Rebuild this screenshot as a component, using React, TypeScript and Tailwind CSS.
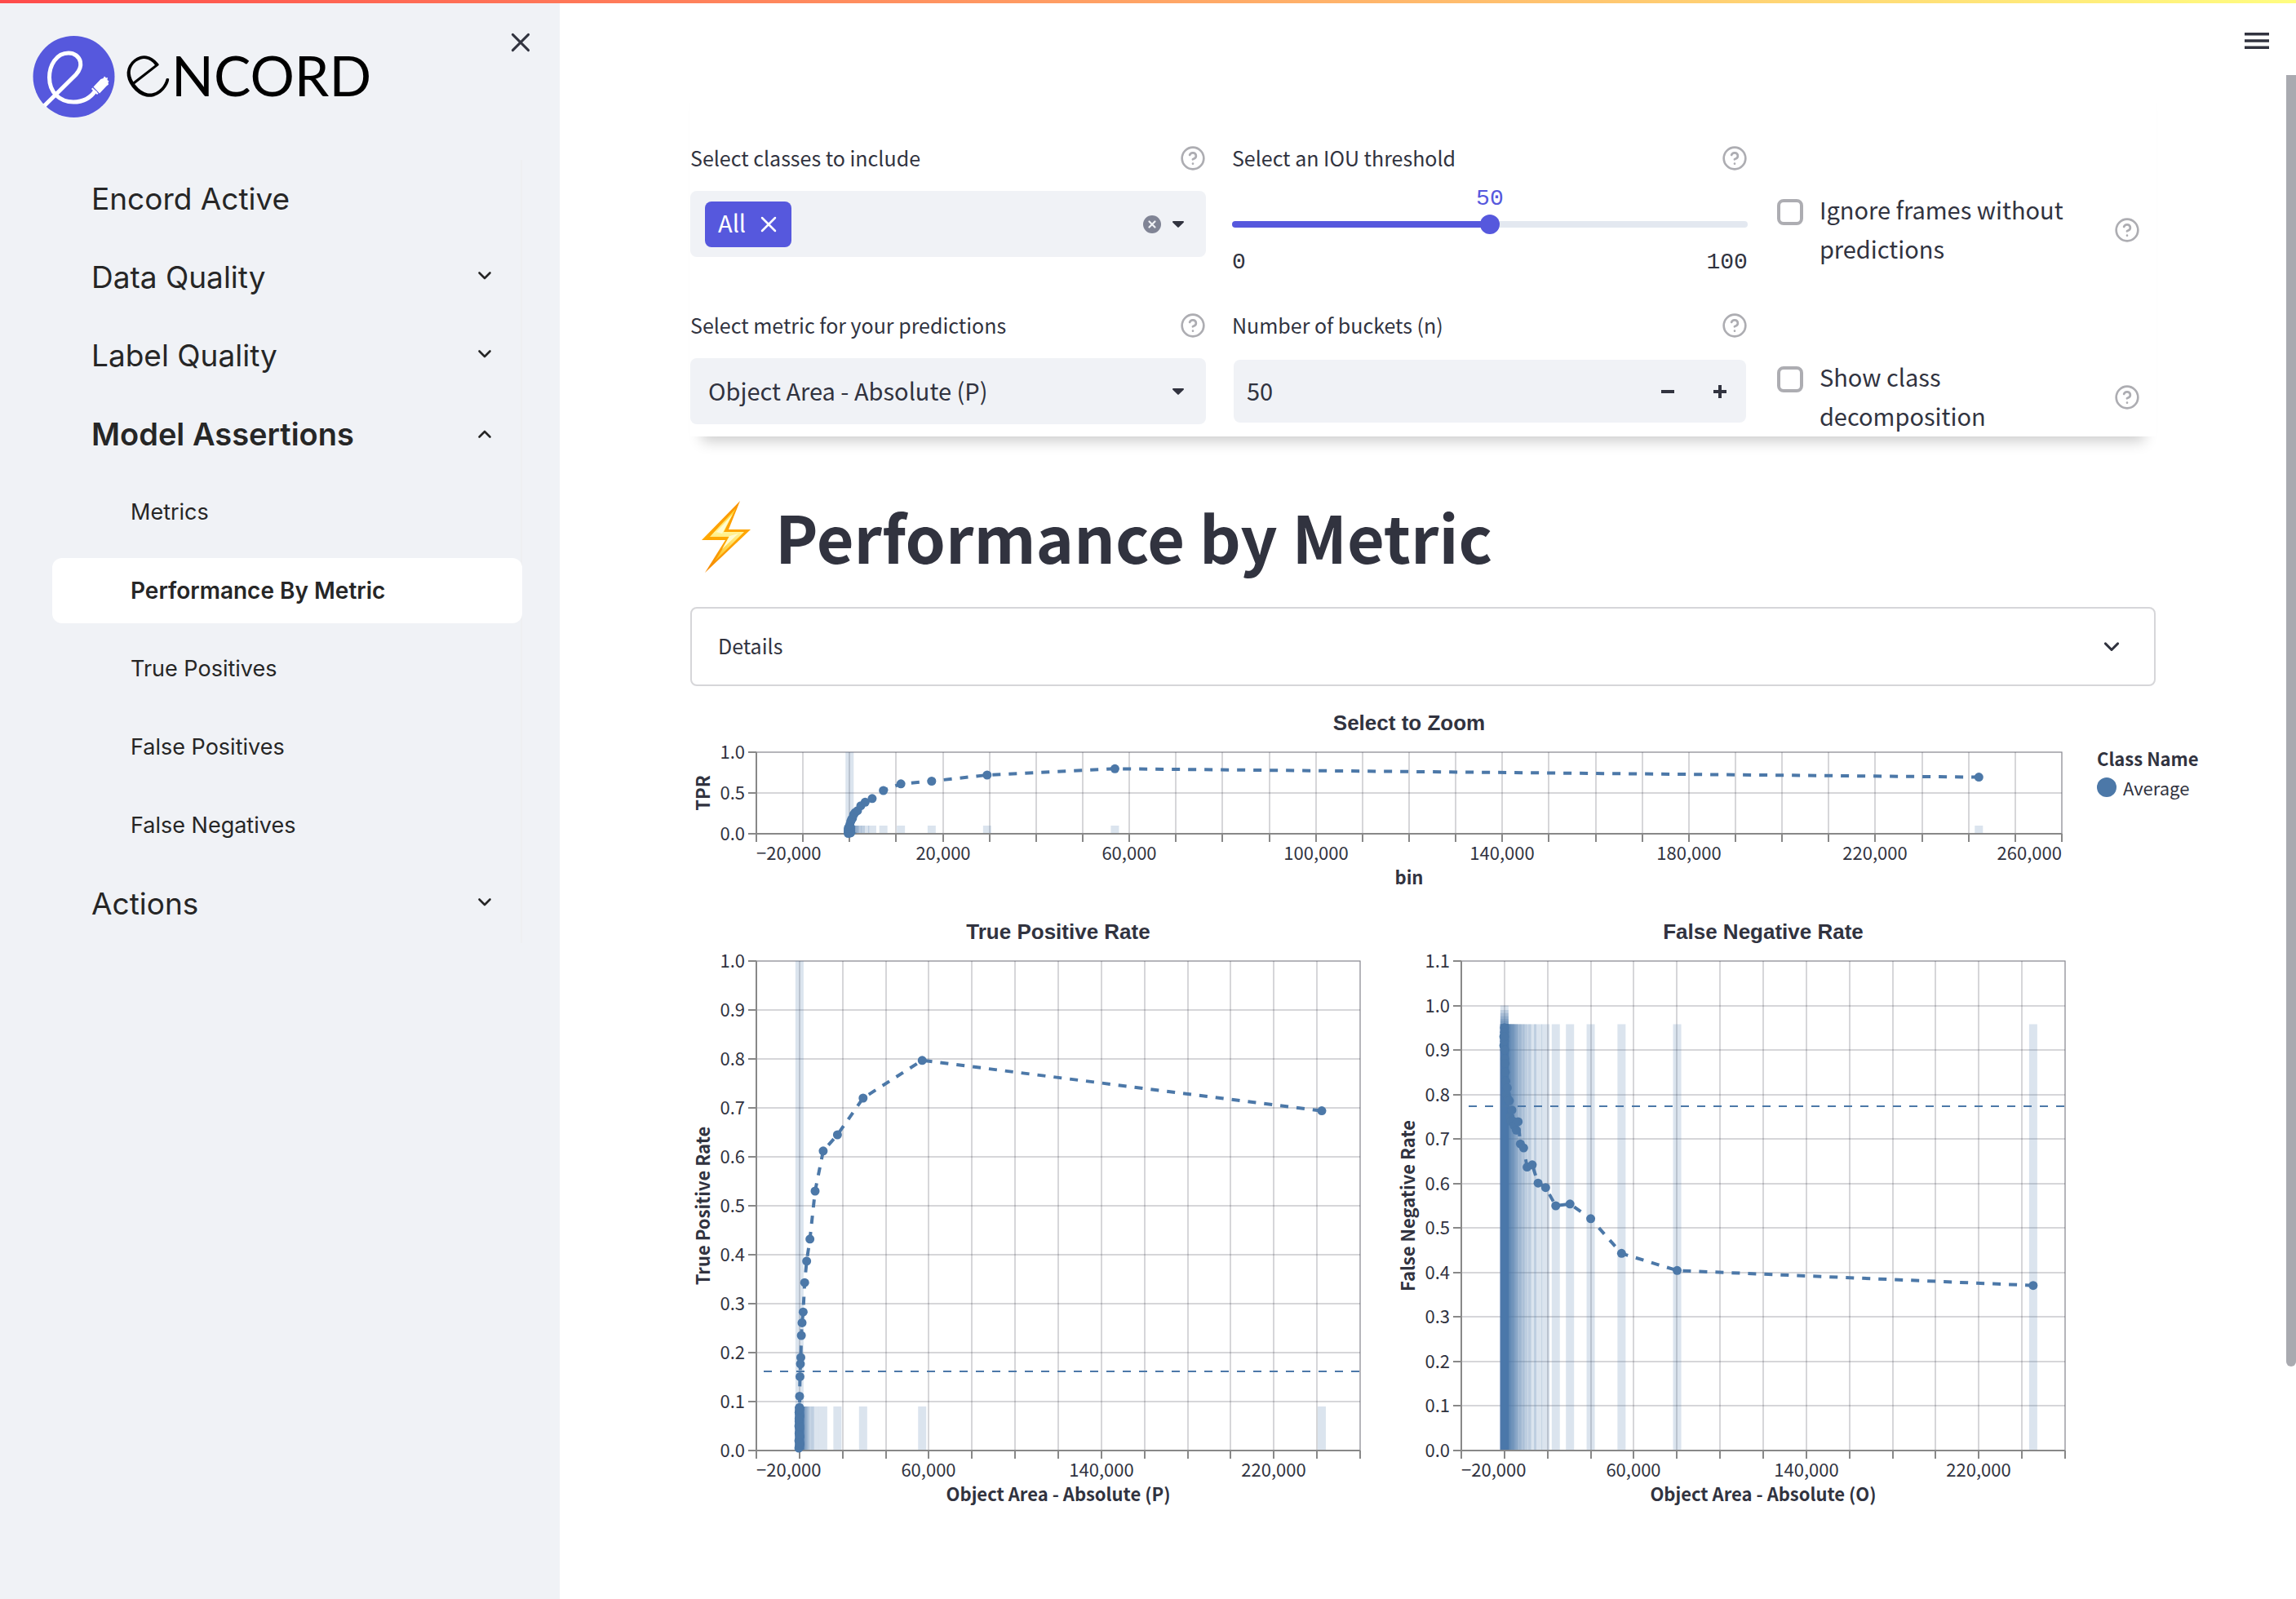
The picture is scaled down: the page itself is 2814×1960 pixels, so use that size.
import { useState } from "react";

type Point = [number, number];

/* ---------- icons ---------- */

function HelpIcon() {
  return (
    <svg viewBox="0 0 24 24" className="size-8 shrink-0" fill="none" stroke="#adadb2" strokeWidth="2" strokeLinecap="round" strokeLinejoin="round">
      <circle cx="12" cy="12" r="10" />
      <path d="M9.09 9a3 3 0 0 1 5.83 1c0 2-3 3-3 3" />
      <path d="M12 17h.01" />
    </svg>
  );
}

function Chevron({ up = false, className = "h-3 w-5" }: { up?: boolean; className?: string }) {
  return (
    <svg viewBox="0 0 20 12" className={`shrink-0 ${className}`} fill="none" stroke="currentColor" strokeWidth="2.6" strokeLinecap="round" strokeLinejoin="round">
      {up ? <path d="M3.5 9.5 10 3l6.500 6.500" /> : <path d="M3.500 2.500 10 9l6.500-6.500" />}
    </svg>
  );
}

function Cross({ className }: { className: string }) {
  return (
    <svg viewBox="0 0 20 20" className={className} fill="none" stroke="currentColor" strokeWidth="2.500" strokeLinecap="round">
      <path d="M2 2 18 18M18 2 2 18" />
    </svg>
  );
}

function Caret() {
  return (
    <svg viewBox="0 0 14 8" className="h-2 w-3.5 shrink-0" fill="#31333f">
      <path d="M1 0h12a1 1 0 0 1 .7 1.700L7.700 7.600a1 1 0 0 1-1.400 0L.3 1.700A1 1 0 0 1 1 0z" />
    </svg>
  );
}

function Bolt() {
  return (
    <svg viewBox="0 0 60 88" className="h-[88px] w-[60px] shrink-0" strokeLinejoin="round">
      <defs>
        <linearGradient id="bolt-edge" x1="0" y1="0" x2="0" y2="1">
          <stop offset="0" stopColor="#fb9405" />
          <stop offset="0.5" stopColor="#ffa800" />
          <stop offset="1" stopColor="#f58a07" />
        </linearGradient>
        <linearGradient id="bolt-fill" x1="0" y1="0" x2="0" y2="1">
          <stop offset="0" stopColor="#ffd21f" />
          <stop offset="0.450" stopColor="#fff59a" />
          <stop offset="1" stopColor="#ffbe12" />
        </linearGradient>
      </defs>
      <path d="M47 0 0 48h29L4 88l56-53H33z" fill="url(#bolt-edge)" />
      <path d="M42 9 10 44h25L16 74l36-36H27z" fill="url(#bolt-fill)" />
      <path d="M38 16 18 38l7 2zM34 43l-9 16 20-19z" fill="#fffbd0" />
    </svg>
  );
}

function Logo() {
  return (
    <svg viewBox="0 0 420 100" className="h-[100px] w-[420px] overflow-visible" role="img" aria-label="Encord">
      <circle cx="50.500" cy="50" r="50" fill="#5658dd" />
      <g fill="none" stroke="#fff" strokeWidth="5">
        <path d="M14.500 85.500 53 47.500C58 42 59.500 37 58.500 32 57 25 51 21 44 21 29 21 20.500 36 20.500 51 20.500 69 33 81 50 81 61 81 71 76 77 67" />
      </g>
      <g fill="#fff">
        <path d="m74.500 62.500 9-9.500 3-1 1.500-2.500 2 2 2-.5-.5 3 2 1.500-1 1.500.5 2.500-2.500 2-8.500 9z" />
        <path d="m73.500 63.500 7 7-1.500 1.500-7-7z" />
      </g>
      <text x="139" y="76" className="font-[Lato] text-[102px] font-light" textAnchor="middle" transform="rotate(-38 139 50)" fill="#000">e</text>
      <text x="170" y="74" className="font-[Lato] text-[68px] font-normal" fill="#000">NCORD</text>
    </svg>
  );
}

/* ---------- sidebar ---------- */

const sections = [
  { label: "Encord Active", icon: "none" },
  { label: "Data Quality", icon: "down" },
  { label: "Label Quality", icon: "down" },
  {
    label: "Model Assertions",
    icon: "up",
    children: ["Metrics", "Performance By Metric", "True Positives", "False Positives", "False Negatives"],
  },
  { label: "Actions", icon: "down" },
];

function Sidebar() {
  return (
    <aside className="flex w-[686px] shrink-0 flex-col bg-[#f0f2f6] font-[Inter,sans-serif] text-[#262626]">
      <div className="flex items-start justify-between pl-10 pr-9 pt-10">
        <div className="pt-1">
          <Logo />
        </div>
        <button type="button" aria-label="Close sidebar" className="flex size-6 items-center justify-center text-[#31333f]">
          <Cross className="size-6" />
        </button>
      </div>
      <nav className="ml-16 mr-[46px] mt-[52px] flex flex-col gap-4 border-r-2 border-[#eeeff1] py-2">
        {sections.map((s) => (
          <div key={s.label} className="flex flex-col gap-4">
            <a href="#" className="flex h-20 items-center justify-between pl-12 pr-[34px]">
              <span className={s.children ? "text-[38px] font-semibold" : "text-[37px]"}>{s.label}</span>
              {s.icon !== "none" && <Chevron up={s.icon === "up"} className={s.icon === "up" ? "h-3 w-5" : "mb-1 h-3 w-5"} />}
            </a>
            {s.children?.map((c) => (
              <a
                key={c}
                href="#"
                className={
                  c === "Performance By Metric"
                    ? "-mr-0.5 flex h-20 items-center rounded-xl bg-white pl-24 text-[28px] font-semibold"
                    : "flex h-20 items-center pl-24 text-[27px]"
                }
              >
                {c}
              </a>
            ))}
          </div>
        ))}
      </nav>
    </aside>
  );
}

/* ---------- controls ---------- */

function FieldLabel({ htmlFor, children }: { htmlFor: string; children: string }) {
  return (
    <div className="mb-[27px] flex h-[27px] items-center justify-between">
      <label htmlFor={htmlFor} className="pb-0.5 text-[25px] leading-[30px]">
        {children}
      </label>
      <HelpIcon />
    </div>
  );
}

function CheckField({ id, children }: { id: string; children: string }) {
  return (
    <div className="flex items-center self-start pl-1 pr-[19px] pt-[52px]">
      <input
        id={id}
        type="checkbox"
        className="mr-5 mt-3 size-8 shrink-0 appearance-none self-start rounded-lg border-4 border-[#adadb2] bg-white checked:bg-[#5658dd]"
      />
      <label htmlFor={id} className="flex-1 pr-8 text-[29px] leading-[48px]">
        {children}
      </label>
      <div className="pt-1">
        <HelpIcon />
      </div>
    </div>
  );
}

function Controls() {
  const [buckets, setBuckets] = useState(50);
  const [iou, setIou] = useState(50);
  return (
    <section className="flex flex-col gap-[53px] bg-white pb-0.5 pt-[88px] shadow-[0_20px_16px_-14px_rgba(0,0,0,0.2)]">
      <div className="grid grid-cols-[1.35fr_1.35fr_1fr] gap-8">
        <div>
          <FieldLabel htmlFor="classes">Select classes to include</FieldLabel>
          <div className="flex h-[81px] items-center rounded-lg bg-[#f0f2f6] pl-[18px] pr-[27px]">
            <span className="flex h-14 items-center gap-[18px] rounded-lg bg-[#5658dd] px-4 text-[29px] leading-none text-white">
              <span className="pb-1">All</span>
              <button type="button" aria-label="Remove All">
                <Cross className="mr-0.5 size-5" />
              </button>
            </span>
            <input id="classes" type="text" className="h-full min-w-0 flex-1 bg-transparent px-2 outline-none" />
            <button type="button" aria-label="Clear all" className="mr-3.5">
              <svg viewBox="0 0 22 22" className="size-[22px]">
                <circle cx="11" cy="11" r="11" fill="#808495" />
                <path d="m7.500 7.500 7 7m0-7-7 7" stroke="#f0f2f6" strokeWidth="2.200" strokeLinecap="round" />
              </svg>
            </button>
            <Caret />
          </div>
        </div>
        <div>
          <FieldLabel htmlFor="iou">Select an IOU threshold</FieldLabel>
          <output htmlFor="iou" className="block text-center font-['Liberation_Mono'] text-[28px] leading-5 text-[#5658dd]">
            {iou}
          </output>
          <div className="mt-[9px] flex h-6 items-center">
            <input
              id="iou"
              type="range"
              min={0}
              max={100}
              value={iou}
              onChange={(e) => setIou(Number(e.target.value))}
              style={{ backgroundImage: `linear-gradient(to right, #5658dd ${iou}%, #e3e8f0 ${iou}%)` }}
              className="h-2 w-full appearance-none rounded [&::-webkit-slider-thumb]:size-6 [&::-webkit-slider-thumb]:appearance-none [&::-webkit-slider-thumb]:rounded-full [&::-webkit-slider-thumb]:bg-[#5658dd]"
            />
          </div>
          <div className="mt-[25px] flex justify-between font-['Liberation_Mono'] text-[28px] leading-5">
            <span>0</span>
            <span>100</span>
          </div>
        </div>
        <CheckField id="ignore">Ignore frames without predictions</CheckField>
      </div>
      <div className="grid grid-cols-[1.35fr_1.35fr_1fr] gap-8">
        <div>
          <FieldLabel htmlFor="metric">Select metric for your predictions</FieldLabel>
          <div className="relative">
            <select id="metric" className="h-[81px] w-full appearance-none rounded-lg bg-[#f0f2f6] pb-0.5 pl-[22px] pr-16 text-[29px]">
              <option>Object Area - Absolute (P)</option>
            </select>
            <div className="pointer-events-none absolute inset-y-0 right-[27px] flex items-center">
              <Caret />
            </div>
          </div>
        </div>
        <div>
          <FieldLabel htmlFor="buckets">Number of buckets (n)</FieldLabel>
          <div className="mx-0.5 mt-[29px] flex h-[77px] items-center rounded-lg bg-[#f0f2f6] pl-4">
            <input
              id="buckets"
              type="text"
              inputMode="numeric"
              value={buckets}
              onChange={(e) => setBuckets(Number(e.target.value) || 0)}
              className="h-full min-w-0 flex-1 bg-transparent pb-1 text-[29px] outline-none"
            />
            <button type="button" aria-label="Decrease" onClick={() => setBuckets(buckets - 1)} className="flex size-16 items-center justify-center">
              <span className="h-1 w-4 bg-[#31333f]" />
            </button>
            <button type="button" aria-label="Increase" onClick={() => setBuckets(buckets + 1)} className="flex size-16 items-center justify-center">
              <svg viewBox="0 0 16 16" className="size-4" fill="#31333f">
                <path d="M6 0h4v6h6v4h-6v6H6v-6H0V6h6z" />
              </svg>
            </button>
          </div>
        </div>
        <CheckField id="decompose">Show class decomposition</CheckField>
      </div>
    </section>
  );
}

/* ---------- charts ---------- */

const BLUE = "#4c78a8";

// Bucket centre in thousands of square pixels, rate in that bucket.
const tprPoints: Point[] = [
  [-0.3, 0.005], [0.2, 0.012], [-0.3, 0.02], [0, 0.01], [0.2, 0.028], [-0.2, 0.035], [0.1, 0.045], [-0.3, 0.05],
  [-0.2, 0.06], [0.1, 0.05], [0.2, 0.07], [-0.2, 0.078], [0, 0.075], [0.1, 0.03], [0.2, 0.015], [-0.2, 0.065],
  [0, 0.088], [0.15, 0.085], [0.05, 0.111], [0.24, 0.151], [0.43, 0.177], [0.62, 0.19], [0.87, 0.235],
  [1.19, 0.261], [1.7, 0.283], [2.4, 0.343], [3.33, 0.387], [4.84, 0.432], [7.24, 0.53], [11, 0.612],
  [17.6, 0.645], [29.5, 0.72], [56.9, 0.797], [242.2, 0.694],
];

const fnrPoints: Point[] = [
  [-0.3, 0.93], [0, 0.95], [-0.3, 0.91], [0, 0.94], [0, 0.92], [0.1, 0.9], [0.1, 0.93], [0.2, 0.88], [0.2, 0.9],
  [0.3, 0.87], [0.4, 0.85], [0.6, 0.83], [0.9, 0.8], [1.3, 0.815], [1.6, 0.79], [2.3, 0.786], [2.6, 0.75],
  [3.45, 0.765], [2.9, 0.74], [4, 0.74], [4.5, 0.73], [5.5, 0.72], [6.36, 0.739], [7.4, 0.689], [8.9, 0.68],
  [10.5, 0.637], [12.9, 0.642], [15.6, 0.601], [19.1, 0.591], [23.8, 0.55], [30.4, 0.554], [40, 0.521],
  [54.3, 0.443], [80.1, 0.4045], [245.2, 0.371],
];

type ChartProps = {
  title: string;
  xTitle: string;
  yTitle: string;
  points: Point[];
  size: [number, number];
  left: number;
  top: number;
  plot: [number, number];
  xStep: number;
  labels: [number, string][];
  yMax: number;
  yStep: number;
  barTop: number;
  tallBar?: boolean;
  fullBars?: number[];
  mean?: number;
  xTitleGap: number;
  yTitleX: number;
};

function Chart(p: ChartProps) {
  const [w, h] = p.plot;
  const right = p.left + w;
  const bottom = p.top + h;
  const x = (v: number) => p.left + ((v + 20) / 280) * w;
  const y = (v: number) => bottom - (v / p.yMax) * h;
  const xs: number[] = [];
  for (let v = -20; v <= 260; v += p.xStep) xs.push(Math.round(x(v)));
  const count = Math.round(p.yMax / p.yStep);
  const ys = Array.from({ length: count + 1 }, (_, i) => i * p.yStep);
  const line = p.points.map(([a, b]) => `${x(a)},${y(b)}`).join(" ");
  const midX = p.left + w / 2;
  const midY = p.top + h / 2;

  return (
    <svg viewBox={`0 0 ${p.size[0]} ${p.size[1]}`} className="block h-auto w-full overflow-visible font-['Noto_Sans_CJK_SC',sans-serif] text-[22px]" fill="#31333f">
      <text x={midX} y={p.top - 27} textAnchor="middle" className="font-['Liberation_Sans'] text-[26px] font-bold">
        {p.title}
      </text>
      <rect x={p.left} y={p.top} width={w} height={h} fill="none" stroke="#31333f" strokeOpacity="0.2" strokeWidth="2" />
      <g stroke="#31333f" strokeOpacity="0.2" strokeWidth="2">
        {xs.map((v) => (
          <path key={v} d={`M${v} ${p.top}V${bottom}`} />
        ))}
        {ys.map((v) => (
          <path key={v} d={`M${p.left} ${Math.round(y(v))}H${right}`} />
        ))}
      </g>
      <g fill={BLUE} fillOpacity="0.2">
        {p.tallBar && <rect x={x(0) - 5} y={p.top} width="10" height={h} />}
        {p.fullBars?.map((v) => (
          <rect key={v} x={x(0) - 5} y={y(v)} width="10" height={bottom - y(v)} />
        ))}
        {p.points.map(([a], i) => (
          <rect key={i} x={x(a) - 5} y={y(p.barTop)} width="10" height={bottom - y(p.barTop)} />
        ))}
      </g>
      {p.mean !== undefined && (
        <path d={`M${p.left + 9} ${Math.round(y(p.mean))}H${right}`} stroke={BLUE} strokeWidth="2" strokeDasharray="10 10" />
      )}
      <g stroke="#888888" strokeWidth="2">
        <path d={`M${p.left} ${p.top}V${bottom}`} />
        <path d={`M${p.left} ${bottom}H${right}`} />
        {xs.map((v) => (
          <path key={v} d={`M${v} ${bottom}v10`} />
        ))}
        {ys.map((v) => (
          <path key={v} d={`M${p.left - 10} ${Math.round(y(v))}h10`} />
        ))}
      </g>
      <polyline points={line} fill="none" stroke={BLUE} strokeWidth="4" strokeDasharray="10 10" />
      {p.points.map(([a, b], i) => (
        <circle key={i} cx={x(a)} cy={y(b)} r="5.500" fill={BLUE} />
      ))}
      {ys.map((v) => (
        <text key={v} x={p.left - 14} y={Math.round(y(v)) + 8} textAnchor="end">
          {v.toFixed(1)}
        </text>
      ))}
      {p.labels.map(([v, label]) => (
        <text key={label} x={Math.round(x(v))} y={bottom + 32} textAnchor={v === -20 ? "start" : v === 260 ? "end" : "middle"}>
          {label}
        </text>
      ))}
      <text x={midX} y={bottom + p.xTitleGap} textAnchor="middle" className="font-bold">
        {p.xTitle}
      </text>
      <text x={p.yTitleX} y={midY} textAnchor="middle" className="font-bold" transform={`rotate(-90 ${p.yTitleX} ${midY})`}>
        {p.yTitle}
      </text>
    </svg>
  );
}

const wideLabels: [number, string][] = [
  [-20, "−20,000"], [20, "20,000"], [60, "60,000"], [100, "100,000"], [140, "140,000"], [180, "180,000"], [220, "220,000"], [260, "260,000"],
];
const smallLabels: [number, string][] = [
  [-20, "−20,000"], [60, "60,000"], [140, "140,000"], [220, "220,000"],
];

function Charts() {
  return (
    <section className="-mr-16 mt-6 flex">
      <div className="flex min-w-0 flex-1 flex-col gap-2">
        <Chart
          title="Select to Zoom" xTitle="bin" yTitle="TPR" points={tprPoints} size={[1724, 244]}
          left={81} top={57} plot={[1600, 100]} xStep={10} labels={wideLabels} yMax={1} yStep={0.5}
          barTop={0.1} tallBar xTitleGap={62} yTitleX={24}
        />
        <div className="grid grid-cols-2">
          <Chart
            title="True Positive Rate" xTitle="Object Area - Absolute (P)" yTitle="True Positive Rate" points={tprPoints}
            size={[862, 740]} left={81} top={61} plot={[740, 600]} xStep={20} labels={smallLabels} yMax={1} yStep={0.1}
            barTop={0.09} tallBar mean={0.162} xTitleGap={62} yTitleX={24}
          />
          <Chart
            title="False Negative Rate" xTitle="Object Area - Absolute (O)" yTitle="False Negative Rate" points={fnrPoints}
            size={[862, 740]} left={83} top={61} plot={[740, 600]} xStep={20} labels={smallLabels} yMax={1.1} yStep={0.1}
            barTop={0.958} fullBars={[1, 0.99, 0.983, 0.976, 0.97, 0.965]} mean={0.774} xTitleGap={62} yTitleX={26}
          />
        </div>
      </div>
      <div className="w-[136px] shrink-0 pt-[46px] text-[22px] leading-9">
        <div className="font-bold">Class Name</div>
        <div className="flex items-center gap-2">
          <span className="size-6 rounded-full bg-[#4c78a8]" />
          Average
        </div>
      </div>
    </section>
  );
}

/* ---------- page ---------- */

export default function App() {
  return (
    <div className="relative flex min-h-screen bg-white font-['Noto_Sans_CJK_SC',sans-serif] text-[#31333f]">
      <Sidebar />
      <main className="min-w-0 flex-1 pr-3">
        <header className="flex h-[92px] items-start justify-end pr-[21px] pt-10">
          <button type="button" aria-label="Main menu">
            <svg viewBox="0 0 30 20" className="h-5 w-[30px]" fill="#31333f">
              <path d="M0 0h30v3.400H0zM0 8.300h30v3.400H0zM0 16.600h30V20H0z" />
            </svg>
          </button>
        </header>
        <div className="px-40">
          <Controls />
          <h1 className="mb-[30px] mt-[75px] flex h-[104px] items-center gap-[30px] pb-2 pl-[14px] text-[79px] font-bold leading-none">
            <Bolt />
            <span className="pb-1">Performance by Metric</span>
          </h1>
          <button type="button" className="flex h-[97px] w-full items-center justify-between rounded-lg border-2 border-[#d6d6d9] pl-8 pr-10 text-[25px]">
            <span className="pb-0.5">Details</span>
            <Chevron className="h-3.5 w-6" />
          </button>
          <Charts />
        </div>
      </main>
      <div className="absolute inset-x-0 top-0 h-1 bg-[linear-gradient(to_right,#ff4b4b,#fffd80)]" />
      <div className="absolute right-0 top-[92px] h-[1583px] w-3 rounded-b-full bg-[#a9aab0]" />
    </div>
  );
}
